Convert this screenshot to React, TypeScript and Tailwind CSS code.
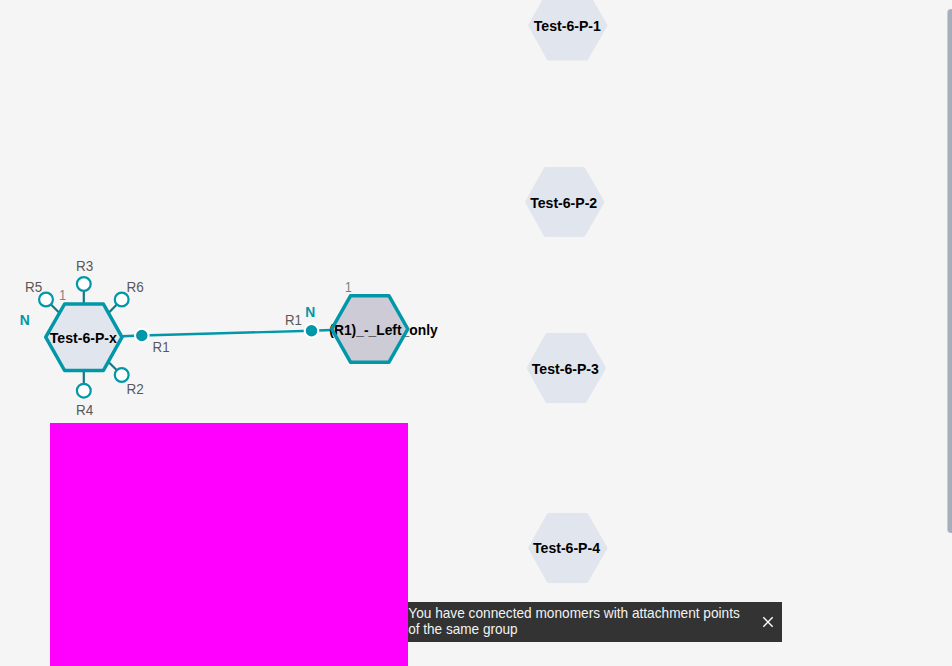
type LabelProps = {
  x: number;
  y: number;
  w: number;
  children: string;
  className?: string;
  size?: number;
};

function Label({ x, y, w, children, className = "fill-[#585858]", size = 15 }: LabelProps) {
  return (
    <text x={x} y={y} textLength={w} lengthAdjust="spacingAndGlyphs" fontSize={size} className={className}>
      {children}
    </text>
  );
}

const monomers = [
  { name: "Test-6-P-1", x: 528, y: -9.5, tx: 533.8, ty: 31 },
  { name: "Test-6-P-2", x: 525, y: 167, tx: 530.2, ty: 208 },
  { name: "Test-6-P-3", x: 526.5, y: 333, tx: 531.8, ty: 374 },
  { name: "Test-6-P-4", x: 528, y: 513, tx: 533, ty: 553 },
];

const points = [
  { name: "R3", x: 83.8, y: 284, sx: 83.8, sy: 303, tx: 76, ty: 271 },
  { name: "R5", x: 46, y: 299.5, sx: 59, sy: 312.5, tx: 25, ty: 292 },
  { name: "R6", x: 121.7, y: 299.5, sx: 109, sy: 312.5, tx: 126.4, ty: 292 },
  { name: "R2", x: 121.7, y: 375, sx: 109, sy: 362.5, tx: 126.4, ty: 394 },
  { name: "R4", x: 83.8, y: 390.7, sx: 83.8, sy: 371, tx: 76, ty: 415 },
];

function Canvas() {
  return (
    <svg width="952" height="666" viewBox="0 0 952 666" className="block">
      {monomers.map((m) => (
        <g key={m.name}>
          <path
            transform={`translate(${m.x} ${m.y})`}
            d="M20.8 0H58.2Q59.5 0 60.2 1.2L79 33.7Q79.8 35 79 36.3L60.2 68.8Q59.5 70 58.2 70H20.8Q19.5 70 18.8 68.8L.6 36.3Q-.1 35 .6 33.7L18.8 1.2Q19.5 0 20.8 0Z"
            className="fill-[#e1e5ed]"
          />
          <Label x={m.tx} y={m.ty} w={67} className="fill-black font-bold">{m.name}</Label>
        </g>
      ))}

      {points.map((p) => (
        <g key={p.name}>
          <line x1={p.sx} y1={p.sy} x2={p.x} y2={p.y} className="stroke-[#167782]" strokeWidth="2.2" />
          <circle cx={p.x} cy={p.y} r="6.9" className="fill-white stroke-[#0097a8]" strokeWidth="2.2" />
          <Label x={p.tx} y={p.ty} w={17.3}>{p.name}</Label>
        </g>
      ))}

      <path d="M122 336.3L141.8 335.5L311.5 330.7L331 330" className="fill-none stroke-[#0097a8]" strokeWidth="2.4" />
      <circle cx="141.8" cy="335.5" r="6.8" className="fill-[#0097a8] stroke-white" strokeWidth="2.1" />
      <circle cx="311.5" cy="330.7" r="6.8" className="fill-[#0097a8] stroke-white" strokeWidth="2.1" />

      <path d="M64.6 304H103.4L122 337.2L103.4 370.5H64.6L45.7 337.2Z" className="fill-[#e1e5ed] stroke-[#0097a8]" strokeWidth="3.5" strokeLinejoin="round" />
      <Label x={49.8} y={343} w={67} className="fill-black font-bold">Test-6-P-x</Label>

      <path d="M350.5 295.8H389L407.8 329L389 362.2H350.5L331.7 329Z" className="fill-[#cdcbd6]" />
      <Label x={329.3} y={335} w={108.4} className="fill-black font-bold">(R1)_-_Left_only</Label>
      <path d="M350.5 295.8H389L407.8 329L389 362.2H350.5L331.7 329Z" className="fill-none stroke-[#0097a8]" strokeWidth="3.5" strokeLinejoin="round" />

      <Label x={152.6} y={352} w={17}>R1</Label>
      <Label x={285} y={325} w={17}>R1</Label>
      <Label x={59.2} y={300} w={6.7} className="fill-[#7c7c7c]">1</Label>
      <Label x={345} y={292} w={6.7} className="fill-[#7c7c7c]">1</Label>
      <Label x={19.7} y={325} w={10} className="fill-[#0097a8] font-bold">N</Label>
      <Label x={305.2} y={317} w={10} className="fill-[#0097a8] font-bold">N</Label>
    </svg>
  );
}

export default function App() {
  return (
    <main className="relative h-[666px] w-[952px] overflow-hidden bg-[#f5f5f5] font-['Liberation_Sans',Arial,sans-serif]">
      <Canvas />
      <div className="absolute top-[423px] left-[50px] h-[243px] w-[358px] bg-[#ff00ff]" />
      <div className="absolute top-[602px] left-[408px] flex h-10 w-[374px] items-center justify-between bg-[#333333] pr-2">
        <svg width="350" height="40" viewBox="0 0 350 40" className="overflow-visible">
          <Label x={0.3} y={16} w={331.5} size={14.5} className="fill-[#f2f2f2]">You have connected monomers with attachment points</Label>
          <Label x={0.2} y={32} w={109.5} size={14.5} className="fill-[#f2f2f2]">of the same group</Label>
        </svg>
        <button aria-label="Close" className="flex size-3 items-center justify-center">
          <svg width="12" height="12" viewBox="0 0 12 12" className="stroke-white" strokeWidth="1.4">
            <path d="M1.3 1.3L10.7 10.7M10.7 1.3L1.3 10.7" />
          </svg>
        </button>
      </div>
      <div className="absolute top-[9px] right-0 h-[524px] w-[5px] rounded-l-sm border-l border-[#c8cdd5] bg-[#a5aebb]" />
    </main>
  );
}
